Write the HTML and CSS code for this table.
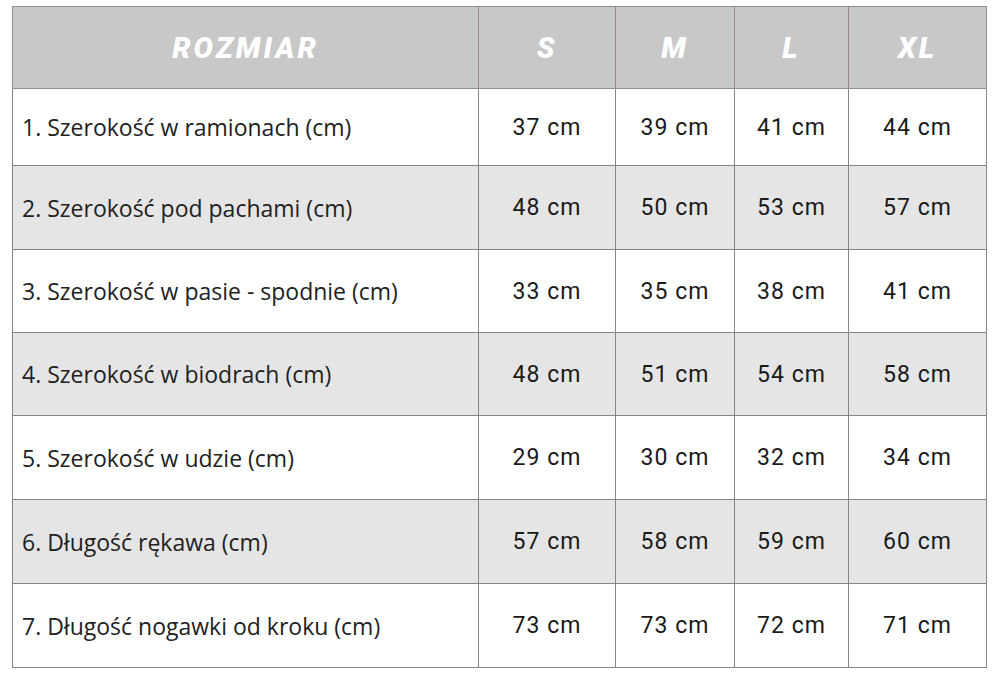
FILE: index.html
```html
<!DOCTYPE html>
<html lang="pl">
<head>
<meta charset="utf-8">
<link rel="stylesheet" href="styles.css">
</head>
<body>
<table class="sizes">
  <colgroup>
    <col class="c-label"><col class="c-s"><col class="c-m"><col class="c-l"><col class="c-xl">
  </colgroup>
  <thead>
    <tr class="head">
      <th>ROZMIAR</th><th>S</th><th>M</th><th>L</th><th>XL</th>
    </tr>
  </thead>
  <tbody>
    <tr class="r1"><td class="label">1. Szerokość w ramionach (cm)</td><td>37 cm</td><td>39 cm</td><td>41 cm</td><td>44 cm</td></tr>
    <tr class="alt"><td class="label">2. Szerokość pod pachami (cm)</td><td>48 cm</td><td>50 cm</td><td>53 cm</td><td>57 cm</td></tr>
    <tr class="short"><td class="label">3. Szerokość w pasie - spodnie (cm)</td><td>33 cm</td><td>35 cm</td><td>38 cm</td><td>41 cm</td></tr>
    <tr class="alt short"><td class="label">4. Szerokość w biodrach (cm)</td><td>48 cm</td><td>51 cm</td><td>54 cm</td><td>58 cm</td></tr>
    <tr><td class="label">5. Szerokość w udzie (cm)</td><td>29 cm</td><td>30 cm</td><td>32 cm</td><td>34 cm</td></tr>
    <tr class="alt"><td class="label">6. Długość rękawa (cm)</td><td>57 cm</td><td>58 cm</td><td>59 cm</td><td>60 cm</td></tr>
    <tr><td class="label">7. Długość nogawki od kroku (cm)</td><td>73 cm</td><td>73 cm</td><td>72 cm</td><td>71 cm</td></tr>
  </tbody>
</table>
</body>
</html>
```

FILE: styles.css
```css
html, body {
  margin: 0;
  padding: 0;
  background: #ffffff;
}
body {
  padding: 6px 0 0 12px;
}
.sizes {
  border-collapse: collapse;
  table-layout: fixed;
  width: 974px;
}
.c-label { width: 466px; }
.c-s { width: 137px; }
.c-m { width: 119px; }
.c-l { width: 114px; }
.c-xl { width: 138px; }

.sizes th, .sizes td {
  border: 1px solid #858585;
  padding: 0;
  text-align: center;
  vertical-align: middle;
}
.head th {
  background: #c8c8c8;
  border-color: #9c8a91;
  height: 81px;
  color: #ffffff;
  font-family: "Roboto", "DejaVu Sans", sans-serif;
  font-weight: 900;
  font-style: italic;
  font-size: 29px;
  letter-spacing: 3px;
}
.sizes td {
  height: 83px;
  color: #1a1a1a;
  font-family: "Roboto", "DejaVu Sans", sans-serif;
  font-size: 23px;
  letter-spacing: 1px;
}
.sizes tr.r1 td { height: 76px; }
.sizes tr.short td { height: 82px; }
.sizes tr.alt td { background: #e5e5e5; }
.sizes td.label {
  text-align: left;
  padding-left: 9px;
  font-family: "Open Sans", "Liberation Sans", sans-serif;
  font-size: 23px;
  letter-spacing: 0;
  color: #222222;
}
```
